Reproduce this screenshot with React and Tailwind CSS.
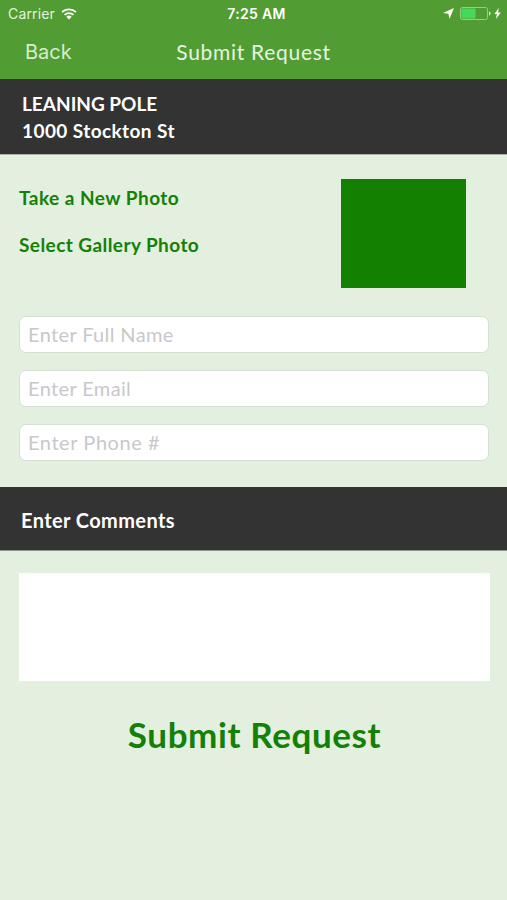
const FIELDS = [
  { name: 'fullName', type: 'text', placeholder: 'Enter Full Name', spacing: 'tracking-[0.37px]' },
  { name: 'email', type: 'email', placeholder: 'Enter Email', spacing: 'tracking-[0.37px]' },
  { name: 'phone', type: 'tel', placeholder: 'Enter Phone #', spacing: 'tracking-[0.57px]' },
];

function WifiIcon() {
  return (
    <svg width="16" height="12" viewBox="0 0 16 12" fill="none" stroke="#fff" strokeWidth="1.7">
      <path d="M1 4.2a10 10 0 0 1 14 0" />
      <path d="M3.5 6.9a6.4 6.4 0 0 1 9 0" />
      <path d="M8 11.4 5.3 8.7a3.9 3.9 0 0 1 5.4 0z" fill="#fff" stroke="none" />
    </svg>
  );
}

function StatusBar() {
  return (
    <div className="grid h-[27px] grid-cols-3 items-center pl-2 pr-[6px] font-['Inter',sans-serif] text-[14px] text-white">
      <div className="flex items-center gap-[6px]">
        <span className="tracking-[0.15px] text-[#e6f2df]">Carrier</span>
        <WifiIcon />
      </div>
      <span className="pl-1 text-center font-semibold tracking-[0.3px]">7:25 AM</span>
      <div className="flex items-center justify-end">
        <svg width="11" height="11" viewBox="0 0 11 11" fill="#fff">
          <path d="M11 0 6.4 11 5.5 5.8 0 4.9z" />
        </svg>
        <svg className="ml-[6px]" width="31" height="13" viewBox="0 0 31 13">
          <rect x=".5" y=".5" width="27" height="12" rx="2" fill="none" stroke="#9bcb85" />
          <rect x="1.5" y="1.5" width="14" height="10" rx="1" fill="#43d95b" />
          <path d="M29 4.3q1.6.6 1.6 2.2T29 8.7z" fill="#d5ead0" />
        </svg>
        <svg className="ml-[3px]" width="7" height="11" viewBox="0 0 7 11" fill="#fff">
          <path d="M4.8 0 .3 6h2.6L1.9 11 6.8 4.6H4z" />
        </svg>
      </div>
    </div>
  );
}

function NavBar() {
  return (
    <nav className="grid h-[52px] grid-cols-[1fr_auto_1fr] items-center pb-[2px] text-[21px] leading-6">
      <button className="justify-self-start pl-[25px] font-['Inter',sans-serif] text-[20px] text-[#d9eccf]">
        Back
      </button>
      <h1 className="tracking-[0.7px] text-[#e6f3e0]">Submit Request</h1>
    </nav>
  );
}

export default function App() {
  return (
    <div className="flex h-[900px] w-[507px] flex-col overflow-hidden bg-[#e3efdf] font-['Lato',sans-serif]">
      <header className="h-[79px] shrink-0 bg-[#519d33]">
        <StatusBar />
        <NavBar />
      </header>

      <section className="h-[76px] shrink-0 border-b border-[#aab1a7] bg-[#333333] pl-[22px] pt-[11px] text-[19px] font-bold leading-[27px] text-white">
        <p>LEANING POLE</p>
        <p className="tracking-[0.42px]">1000 Stockton St</p>
      </section>

      <section className="flex h-[161px] shrink-0 justify-between pl-[19px] pr-[41px] pt-6">
        <div className="flex flex-col items-start gap-[23px] pt-[7px] text-[19px] font-bold leading-6 text-[#138006]">
          <button className="tracking-[0.48px]">Take a New Photo</button>
          <button className="tracking-[0.43px]">Select Gallery Photo</button>
        </div>
        <div className="h-[109px] w-[125px] bg-[#138002]" />
      </section>

      <form className="flex h-[171px] shrink-0 flex-col gap-[17px] pl-[19px] pr-[18px]">
        {FIELDS.map((field) => (
          <input
            key={field.name}
            name={field.name}
            type={field.type}
            placeholder={field.placeholder}
            className={`h-[37px] w-full shrink-0 rounded-[7px] border border-[#d5dfd3] bg-white px-2 pb-[2px] text-[20px] outline-none placeholder:text-[#c8c8cc] ${field.spacing}`}
          />
        ))}
      </form>

      <section className="flex h-[64px] shrink-0 items-center border-b border-[#8d948b] bg-[#333333] pl-[21px] pt-[3px] text-[20px] font-bold text-white">
        <h2 className="tracking-[0.4px]">Enter Comments</h2>
      </section>

      <div className="flex flex-col pl-[19px] pr-[17px] pt-[22px]">
        <textarea className="h-[108px] resize-none bg-white outline-none" />
        <button className="mt-[31px] self-center text-[35px] font-bold leading-[44px] tracking-[0.6px] text-[#138006]">
          Submit Request
        </button>
      </div>
    </div>
  );
}
